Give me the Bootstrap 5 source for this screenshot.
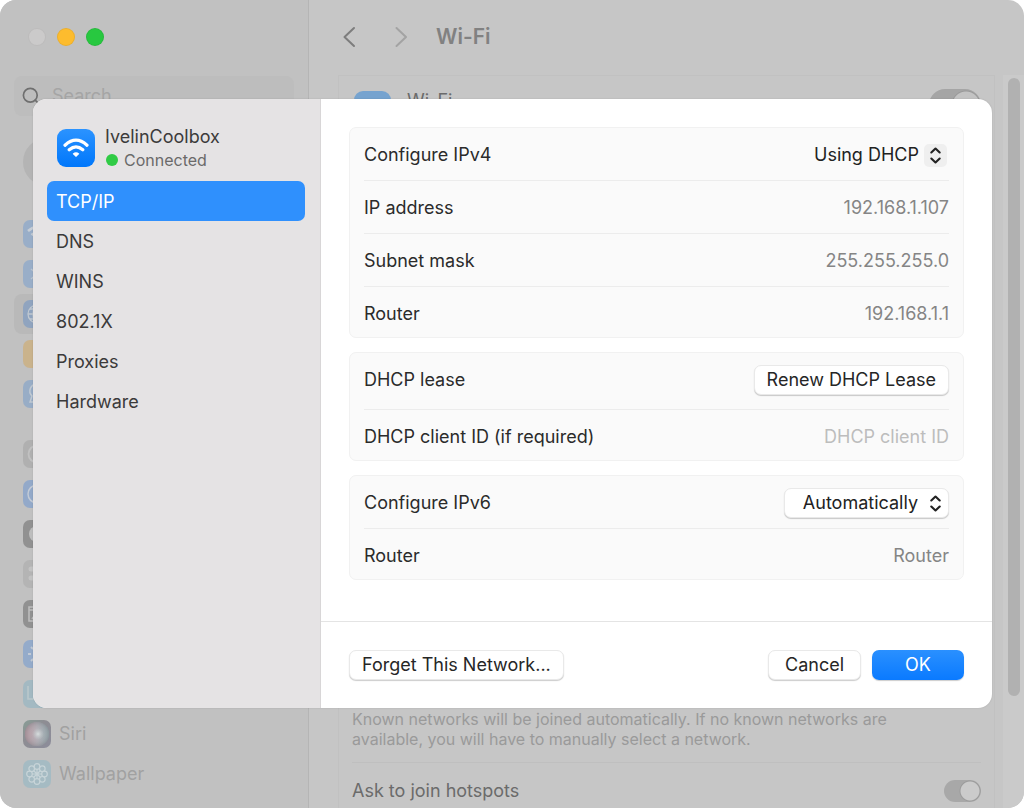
<!DOCTYPE html>
<html lang="en">
<head>
<meta charset="utf-8">
<meta name="viewport" content="width=device-width, initial-scale=1">
<title>Wi-Fi – Network details</title>
<link href="https://cdn.jsdelivr.net/npm/bootstrap@5.3.0/dist/css/bootstrap.min.css" rel="stylesheet">
<style>
  body { font-family: Inter, "Liberation Sans", sans-serif; font-size: 18px; line-height: 24px; color: #2b2b2b; background: #fff; }
  .settings-window { min-height: 100vh; background: #c6c6c6; border-radius: 16px; }

  /* dimmed settings window */
  .side-pane { width: 309px; background: #c1c1c1; border-right: 1px solid #b5b5b5; padding: 28px 14px 13px; }
  .lights { gap: 11px; padding-left: 14px; height: 18px; }
  .light { width: 18px; height: 18px; border-radius: 50%; border: 1px solid #0001; padding: 0; }
  .light-off { background: #cbcaca; } .light-min { background: #fdbc2e; } .light-max { background: #28c840; }
  .search-field { height: 40px; margin-top: 30px; padding: 0 8px; gap: 11px; border-radius: 8px; background: #bdbdbd; color: #6f6f6f; }
  .search-field svg { flex: none; }
  .search-field input { border: 0; background: none; min-width: 0; padding: 0; outline: 0; }
  .search-field input::placeholder { color: #a5a5a5; opacity: 1; }
  .avatar { width: 48px; height: 48px; margin: 22px 0 0 9px; border-radius: 50%; background: #b4b4b4; }
  .pane-link { height: 40px; padding-left: 9px; gap: 8px; border-radius: 8px; color: #a1a1a1; text-decoration: none; }
  .pane-link.current { background: #b9b9b9; }
  .pane-link svg { width: 28px; height: 28px; border-radius: 7px; flex: none; opacity: .8; }
  .group-a { margin-top: 28px; } .group-b { margin-top: 20px; }

  .main-head { height: 75px; padding: 0 34px 2px; color: #858585; }
  .main-head h1 { font-size: 21px; line-height: 28px; margin: 0 0 0 28px; font-weight: 600; color: #818181; }
  .main-head button { border: 0; background: none; padding: 0; display: flex; }
  .main-head .forward { margin-left: 39px; }
  .main-box { margin: 0 8px 0 29px; padding: 0 13px; border: 1px solid #c1c1c1; border-bottom: 0; }
  .wifi-row { padding: 15px 0 0 2px; }
  .wifi-row label { line-height: 20px; color: #6b6b6b; }
  .wifi-tile { width: 37px; height: 37px; border-radius: 9px; background: #76a3cf; }
  .note { font-size: 16px; line-height: 20px; color: #9a9a9a; padding-bottom: 13px; border-bottom: 1px solid #bfbfbf; }
  .ask-row { height: 45px; padding-top: 10px; color: #6b6b6b; }
  .switch-off { appearance: none; width: 37px; height: 22px; margin: 0; border-radius: 11px; background: radial-gradient(circle at 26px 11px, #cbcbcb 9px, #9b9b9b 10px, #a8a8a8 11px); }
  .switch-big { width: 52px; height: 32px; border-radius: 16px; background: radial-gradient(circle at 37px 16px, #c3c3c3 13px, #999 14px, #a5a5a5 15px); }
  .wifi-row .switch-big { margin-top: -2px; }
  .track { width: 21px; background: #cacaca; padding: 3px 4px 112px 5px; margin-top: 75px; border-radius: 0 0 16px 0; }
  .thumb { border-radius: 6px; background: #b1b1b1; }

  /* sheet on top of the window */
  .sheet { top: 99px; left: 33px; right: 32px; border-radius: 14px; background: #fff; box-shadow: 0 0 2px #0002; }
  .sheet-nav { width: 288px; background: #e5e3e4; border-right: 1px solid #d8d6d7; padding: 26px 15px 14px 14px; }
  .net-head { padding-left: 10px; gap: 10px; height: 56px; }
  .net-tile { width: 38px; height: 38px; border-radius: 9px; background: linear-gradient(#2b93ff, #0077fb); margin-top: 4px; }
  .net-name { line-height: 24px; color: #3c3b3b; }
  .net-status { font-size: 16px; line-height: 22px; color: #6b6a6a; gap: 6px; }
  .dot { width: 12px; height: 12px; border-radius: 50%; background: #30cb45; margin-left: 1px; }
  .tab-link { height: 40px; line-height: 42px; padding: 0 9px; border-radius: 7px; color: #3b3a3a; text-decoration: none; }
  .tab-link.active { background: #2f90fd; color: #fff; }
  .sheet-body { padding: 28px 28px 41px; gap: 14px; }
  .group { background: #fafafa; border: 1px solid #f1f1f1; border-radius: 7px; padding: 0 14px; }
  .field-row { height: 53px; padding-top: 1px; border-bottom: 1px solid #ececec; }
  .field-row.tall { height: 57px; padding: 0 0 3px; }
  .field-row:last-child { border-bottom: 0; height: 50px; padding-top: 3px; }
  .value { color: #858585; }
  .client-id { border: 0; background: none; padding: 0; text-align: right; width: 200px; color: #2b2b2b; outline: 0; }
  .client-id::placeholder { color: #bdbdbd; opacity: 1; }
  .mac-btn { height: 30px; padding: 0 12px; line-height: 28px; background: #fff; border: 1px solid #e9e9e9; border-radius: 7px; color: #262626; box-shadow: 0 1px 1px #0003; }
  .mac-btn.primary { border: 0; background: linear-gradient(#2a90ff, #0a7aff); color: #fff; width: 92px; }
  .mac-btn.cancel { width: 93px; }
  .picker { appearance: none; height: 30px; line-height: 28px; padding: 0 30px 0 0; text-align-last: right; color: #222; width: 165px; outline: 0; }
  .picker.plain { border: 0; background: none; }
  .picker.boxed { background: #fff; border: 1px solid #e9e9e9; border-radius: 7px; box-shadow: 0 1px 1px #0003; }
  .chevrons { right: 2px; top: 4px; width: 23px; height: 23px; border-radius: 5px; pointer-events: none; }
  .chevrons.shaded { background: #efefef; }
  .sheet-foot { border-top: 1px solid #e4e4e4; padding: 28px; gap: 11px; }
</style>
</head>
<body>
<div class="settings-window position-relative d-flex overflow-hidden">

  <nav class="side-pane flex-shrink-0" aria-label="Settings">
    <div class="lights d-flex">
      <button class="light light-off" aria-label="Close"></button>
      <button class="light light-min" aria-label="Minimize"></button>
      <button class="light light-max" aria-label="Zoom"></button>
    </div>
    <label class="search-field d-flex align-items-center">
      <svg width="19" height="19" viewBox="0 0 19 19" fill="none" stroke="currentColor" stroke-width="1.7" stroke-linecap="round"><circle cx="8.3" cy="8.3" r="6.9"/><path d="M13.2 13.2l4 4"/></svg>
      <input type="search" placeholder="Search" aria-label="Search">
    </label>
    <div class="avatar"></div>

    <div class="group-a">
      <a class="pane-link d-flex align-items-center" href="#" aria-label="Wi-Fi"><svg viewBox="0 0 28 28"><rect width="28" height="28" fill="#90aaca"/><path d="M5 11q9-8 18 0M8.500 15q5.500-5 11 0" fill="none" stroke="#c9d2dc" stroke-width="2.500"/></svg></a>
      <a class="pane-link d-flex align-items-center" href="#" aria-label="Bluetooth"><svg viewBox="0 0 28 28"><rect width="28" height="28" fill="#90aaca"/><path d="M8 9l12 10-6 5V4l6 5L8 19" fill="none" stroke="#b8c6d6" stroke-width="1.500"/></svg></a>
      <a class="pane-link current d-flex align-items-center" href="#" aria-label="Network"><svg viewBox="0 0 28 28"><rect width="28" height="28" fill="#86a0c1"/><g fill="none" stroke="#c3ccd6" stroke-width="1.300"><circle cx="14" cy="14" r="9"/><ellipse cx="14" cy="14" rx="4" ry="9"/><path d="M5 14h18M7 9h14M7 19h14"/></g></svg></a>
      <a class="pane-link d-flex align-items-center" href="#" aria-label="Notifications"><svg viewBox="0 0 28 28"><rect width="28" height="28" fill="#cdb080"/></svg></a>
      <a class="pane-link d-flex align-items-center" href="#" aria-label="Screen Time"><svg viewBox="0 0 28 28"><rect width="28" height="28" fill="#8fa9c8"/><path d="M14 4a7 7 0 0 0-5 12l-2 6h14M7 22h5" fill="none" stroke="#c0cbd7" stroke-width="1.500"/></svg></a>
    </div>
    <div class="group-b">
      <a class="pane-link d-flex align-items-center" href="#" aria-label="General"><svg viewBox="0 0 28 28"><rect width="28" height="28" fill="#adadad"/><circle cx="14" cy="14" r="8.500" fill="none" stroke="#c2c2c2" stroke-width="1.800"/></svg></a>
      <a class="pane-link d-flex align-items-center" href="#" aria-label="Accessibility"><svg viewBox="0 0 28 28"><rect width="28" height="28" fill="#88a4cc"/><circle cx="14" cy="14" r="9" fill="none" stroke="#c3cddb" stroke-width="1.500"/></svg></a>
      <a class="pane-link d-flex align-items-center" href="#" aria-label="Appearance"><svg viewBox="0 0 28 28"><rect width="28" height="28" fill="#868686"/><circle cx="14" cy="14" r="8" fill="#bebebe"/></svg></a>
      <a class="pane-link d-flex align-items-center" href="#" aria-label="Control Center"><svg viewBox="0 0 28 28"><rect width="28" height="28" fill="#b1b1b1"/><path d="M8 9h12M8 18h12" stroke="#c4c4c4" stroke-width="5" stroke-linecap="round"/></svg></a>
      <a class="pane-link d-flex align-items-center" href="#" aria-label="Desktop &amp; Dock"><svg viewBox="0 0 28 28"><rect width="28" height="28" fill="#868686"/><path d="M6 7h16v14H6zM6 10h16M9 19l3-4" fill="none" stroke="#bdbdbd" stroke-width="1.600"/></svg></a>
      <a class="pane-link d-flex align-items-center" href="#" aria-label="Displays"><svg viewBox="0 0 28 28"><rect width="28" height="28" fill="#8aa6cd"/><path d="M5 14h3M8 7l2 2M8 21l2-2M14 4v3" stroke="#c3cddb" stroke-width="1.800"/><circle cx="14" cy="14" r="4" fill="#c3cddb"/></svg></a>
      <a class="pane-link d-flex align-items-center" href="#" aria-label="Screen Saver"><svg viewBox="0 0 28 28"><rect width="28" height="28" fill="#9cb8c3"/><path d="M5 6v13h14" fill="none" stroke="#b9c9cf" stroke-width="1.600"/></svg></a>
      <a class="pane-link d-flex align-items-center" href="#"><svg viewBox="0 0 28 28"><defs><linearGradient id="siri-edge" x1="0" y1="0" x2="1" y2="1"><stop offset="0" stop-color="#7a958c"/><stop offset=".4" stop-color="#828188"/><stop offset="1" stop-color="#7f8092"/></linearGradient><radialGradient id="siri-orb" cx=".5" cy=".5" r=".5"><stop offset="0" stop-color="#fff" stop-opacity="0"/><stop offset="1" stop-color="#808088"/></radialGradient><linearGradient id="siri-hue" x1="0" y1="0" x2="1" y2="0"><stop offset="0" stop-color="#b9818d"/><stop offset=".5" stop-color="#a7a0ab"/><stop offset="1" stop-color="#7ea1a8"/></linearGradient><radialGradient id="siri-core"><stop offset="0" stop-color="#dfe6e6"/><stop offset="1" stop-color="#c6cfd1" stop-opacity="0"/></radialGradient></defs><rect width="28" height="28" fill="url(#siri-edge)"/><circle cx="14" cy="14" r="12" fill="url(#siri-hue)"/><circle cx="14" cy="14" r="12" fill="url(#siri-orb)" opacity=".6"/><circle cx="15" cy="14" r="6" fill="url(#siri-core)"/></svg>Siri</a>
      <a class="pane-link d-flex align-items-center" href="#"><svg viewBox="0 0 28 28"><rect width="28" height="28" fill="#9fbac4"/><g fill="none" stroke="#c9d9de" stroke-width="1.200"><circle cx="14" cy="6.500" r="2.800"/><circle cx="19.300" cy="8.700" r="2.800"/><circle cx="21.500" cy="14" r="2.800"/><circle cx="19.300" cy="19.300" r="2.800"/><circle cx="14" cy="21.500" r="2.800"/><circle cx="8.700" cy="19.300" r="2.800"/><circle cx="6.500" cy="14" r="2.800"/><circle cx="8.700" cy="8.700" r="2.800"/><path d="M14 9v10M9 14h10M10.500 10.500l7 7M17.500 10.500l-7 7"/></g></svg>Wallpaper</a>
    </div>
  </nav>

  <main class="flex-grow-1 d-flex flex-column">
    <header class="main-head d-flex align-items-center">
      <button aria-label="Back"><svg width="13" height="22" viewBox="0 0 13 22" fill="none" stroke="#7d7d7d" stroke-width="2" stroke-linecap="round" stroke-linejoin="round"><path d="M11 2L1.500 11l9.500 9"/></svg></button>
      <button class="forward" aria-label="Forward"><svg width="13" height="22" viewBox="0 0 13 22" fill="none" stroke="#a3a3a3" stroke-width="2" stroke-linecap="round" stroke-linejoin="round"><path d="M1.500 2l9.500 9-9.500 9"/></svg></button>
      <h1>Wi-Fi</h1>
    </header>
    <div class="d-flex flex-column flex-grow-1 main-box">
      <div class="wifi-row d-flex justify-content-between align-items-start">
        <div class="d-flex align-items-start gap-3"><span class="wifi-tile"></span><label for="wifi-on">Wi-Fi</label></div>
        <input class="switch-off switch-big" type="checkbox" role="switch" id="wifi-on">
      </div>
      <p class="note mt-auto mb-0">Known networks will be joined automatically. If no known networks are<br>available, you will have to manually select a network.</p>
      <div class="ask-row d-flex justify-content-between align-items-center">
        <label for="ask-join">Ask to join hotspots</label>
        <input class="switch-off" type="checkbox" role="switch" id="ask-join">
      </div>
    </div>
  </main>
  <div class="track d-flex flex-column flex-shrink-0"><div class="thumb flex-grow-1"></div></div>

  <section class="sheet position-absolute d-flex overflow-hidden" role="dialog" aria-label="IvelinCoolbox">
    <nav class="sheet-nav flex-shrink-0" aria-label="Network details">
      <div class="net-head d-flex align-items-start">
        <span class="net-tile d-flex align-items-center justify-content-center flex-shrink-0">
          <svg width="26" height="20" viewBox="0 0 26 20" fill="none" stroke="#fff" stroke-width="3.200" stroke-linecap="round"><path d="M2 7.200Q13-2.800 24 7.200M6.200 11.800q6.800-6 13.600 0"/><path d="M13 19l-3.300-3.300q3.300-2.700 6.600 0z" fill="#fff" stroke="none"/><path d="M11.500 16.200q1.500-1 3 0L13 17.500z" fill="#fff" stroke-width="1.500"/></svg>
        </span>
        <div>
          <div class="net-name">IvelinCoolbox</div>
          <div class="net-status d-flex align-items-center"><span class="dot"></span>Connected</div>
        </div>
      </div>
      <div class="nav flex-column">
        <a class="tab-link active" href="#" aria-current="page">TCP/IP</a>
        <a class="tab-link" href="#">DNS</a>
        <a class="tab-link" href="#">WINS</a>
        <a class="tab-link" href="#">802.1X</a>
        <a class="tab-link" href="#">Proxies</a>
        <a class="tab-link" href="#">Hardware</a>
      </div>
    </nav>

    <form class="flex-grow-1 d-flex flex-column">
      <div class="sheet-body d-flex flex-column">
        <div class="group">
          <div class="field-row d-flex align-items-center justify-content-between">
            <label for="ipv4">Configure IPv4</label>
            <div class="position-relative">
              <select class="picker plain" id="ipv4"><option>Using DHCP</option><option>Manually</option><option>Off</option></select>
              <svg class="chevrons shaded position-absolute" viewBox="0 0 23 23" fill="none" stroke="#222" stroke-width="2.100" stroke-linecap="round" stroke-linejoin="round"><path d="M7.300 8.500l4.200-4L15.700 8.500M7.300 14.500l4.200 4 4.200-4"/></svg>
            </div>
          </div>
          <div class="field-row d-flex align-items-center justify-content-between"><span>IP address</span><span class="value">192.168.1.107</span></div>
          <div class="field-row d-flex align-items-center justify-content-between"><span>Subnet mask</span><span class="value">255.255.255.0</span></div>
          <div class="field-row d-flex align-items-center justify-content-between"><span>Router</span><span class="value">192.168.1.1</span></div>
        </div>
        <div class="group">
          <div class="field-row tall d-flex align-items-center justify-content-between"><span>DHCP lease</span><button type="button" class="mac-btn">Renew DHCP Lease</button></div>
          <div class="field-row d-flex align-items-center justify-content-between"><label for="client">DHCP client ID (if required)</label><input class="client-id" id="client" type="text" placeholder="DHCP client ID"></div>
        </div>
        <div class="group">
          <div class="field-row d-flex align-items-center justify-content-between">
            <label for="ipv6">Configure IPv6</label>
            <div class="position-relative">
              <select class="picker boxed" id="ipv6"><option>Automatically</option><option>Manually</option></select>
              <svg class="chevrons position-absolute" viewBox="0 0 23 23" fill="none" stroke="#222" stroke-width="2.100" stroke-linecap="round" stroke-linejoin="round"><path d="M7.300 8.500l4.200-4L15.700 8.500M7.300 14.500l4.200 4 4.200-4"/></svg>
            </div>
          </div>
          <div class="field-row d-flex align-items-center justify-content-between"><span>Router</span><span class="value">Router</span></div>
        </div>
      </div>
      <div class="sheet-foot d-flex align-items-center">
        <button type="button" class="mac-btn me-auto">Forget This Network...</button>
        <button type="button" class="mac-btn cancel">Cancel</button>
        <button type="button" class="mac-btn primary">OK</button>
      </div>
    </form>
  </section>
</div>
<script src="https://cdn.jsdelivr.net/npm/bootstrap@5.3.0/dist/js/bootstrap.bundle.min.js"></script>
</body>
</html>
